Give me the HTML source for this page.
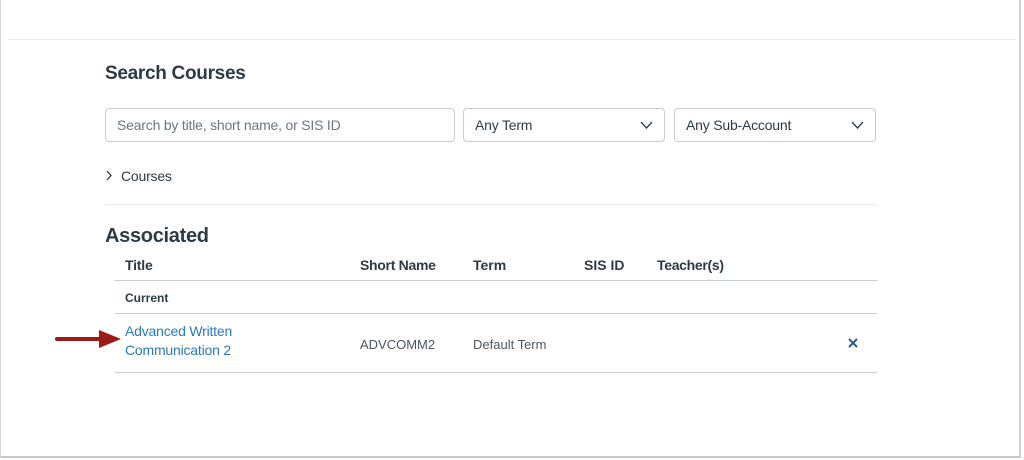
<!DOCTYPE html>
<html><head><style>
*{margin:0;padding:0;box-sizing:border-box}
body{width:1024px;height:460px;background:#fff;font-family:"Liberation Sans",sans-serif;color:#2d3b45;position:relative;overflow:hidden}
.a{position:absolute;white-space:nowrap}
.frame{position:absolute;left:0;top:0;width:1021px;height:458px;border-left:1px solid #d8d8d8;border-right:2px solid #d0d0d0;border-bottom:2px solid #c8c8c8;background:#fff}
.line{position:absolute;height:1px;background:#e4e4e4}
.box{position:absolute;height:34px;border:1px solid #c7cdd1;border-radius:4px;font-size:14px;padding:0 11px;line-height:32px;letter-spacing:-0.2px}
.chev{position:absolute;right:11px;top:12px}
</style></head><body>
<div class="frame"></div>
<div class="line" style="left:8px;top:39px;width:1008px;background:#ececec"></div>
<div class="a" style="left:105px;top:63px;font-size:19px;font-weight:bold;letter-spacing:-0.3px">Search Courses</div>
<div class="box" style="left:105px;top:108px;width:350px;color:#6b7780">Search by title, short name, or SIS ID</div>
<div class="box" style="left:463px;top:108px;width:202px">Any Term<svg class="chev" width="13" height="8" viewBox="0 0 13 8"><path d="M1 1l5.5 6L12 1" fill="none" stroke="#2d3b45" stroke-width="1.3"/></svg></div>
<div class="box" style="left:674px;top:108px;width:202px">Any Sub-Account<svg class="chev" width="13" height="8" viewBox="0 0 13 8"><path d="M1 1l5.5 6L12 1" fill="none" stroke="#2d3b45" stroke-width="1.3"/></svg></div>
<svg class="a" style="left:106px;top:170px" width="6" height="11" viewBox="0 0 6 11"><path d="M1 1l4 4.5L1 10" fill="none" stroke="#2d3b45" stroke-width="1.3"/></svg>
<div class="a" style="left:121px;top:168px;font-size:14px;letter-spacing:-0.2px">Courses</div>
<div class="line" style="left:105px;top:204px;width:771px;background:#e8e8e8"></div>
<div class="a" style="left:105px;top:225px;font-size:20px;font-weight:bold;letter-spacing:-0.3px">Associated</div>
<div class="a" style="left:125px;top:257px;font-size:14px;font-weight:bold;letter-spacing:-0.2px">Title</div>
<div class="a" style="left:360px;top:257px;font-size:14px;font-weight:bold;letter-spacing:-0.3px">Short Name</div>
<div class="a" style="left:473px;top:257px;font-size:14px;font-weight:bold">Term</div>
<div class="a" style="left:584px;top:257px;font-size:14px;font-weight:bold">SIS ID</div>
<div class="a" style="left:657px;top:257px;font-size:14px;font-weight:bold;letter-spacing:-0.3px">Teacher(s)</div>
<div class="line" style="left:115px;top:280px;width:762px;background:#c7cdd1"></div>
<div class="a" style="left:125px;top:291px;font-size:12px;font-weight:bold">Current</div>
<div class="line" style="left:115px;top:313px;width:762px;background:#c7cdd1"></div>
<div class="a" style="left:125px;top:322px;font-size:14px;line-height:19px;color:#2b7abc;letter-spacing:-0.2px">Advanced Written<br>Communication 2</div>
<div class="a" style="left:360px;top:337px;font-size:13px;color:#4a5660">ADVCOMM2</div>
<div class="a" style="left:473px;top:337px;font-size:13px;color:#4a5660">Default Term</div>
<svg class="a" style="left:848px;top:338px" width="10" height="10" viewBox="0 0 10 10"><path d="M1 1l8 8M9 1l-8 8" stroke="#2d5b8e" stroke-width="2"/></svg>
<div class="line" style="left:115px;top:372px;width:762px;background:#c7cdd1"></div>
<svg class="a" style="left:55px;top:329px" width="68" height="20" viewBox="0 0 68 20"><path d="M2 10H46" stroke="#9b1b1b" stroke-width="4" stroke-linecap="round"/><path d="M44 1L66 10L44 19Z" fill="#9b1b1b"/></svg>
</body></html>
